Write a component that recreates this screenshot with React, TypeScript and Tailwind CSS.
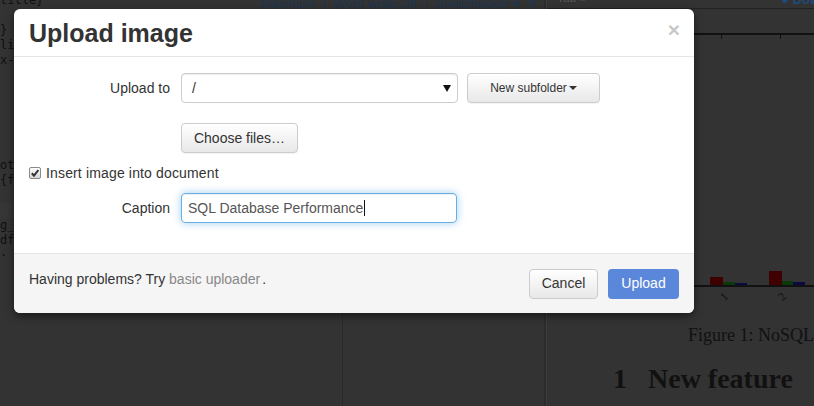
const mono = "font-['DejaVu_Sans_Mono',monospace]"

const codeLines = [
  '',
  '}',
  'li',
  'x-',
  '',
  '',
  '',
  '',
  '',
  '',
  'ot',
  '{f',
  '',
  '',
  'g_',
  'df',
  '· P',
  '',
  '',
  '',
  '',
  '',
  '',
  '',
  '',
  '',
]

function Backdrop() {
  return (
    <div className="absolute inset-0 flex">
      {/* editor side */}
      <div className="w-[544px] flex flex-col">
        <div className="h-[8px] flex overflow-hidden">
          <div className={`w-[260px] text-[12px] leading-[12px] -mt-[6px] text-[#101010] ${mono}`}>title{'}'}</div>
          <div className="text-[13px] leading-[13px] -mt-[3px] text-[#1f3650] whitespace-nowrap">
            Maximize&nbsp; | &nbsp;Word wrap: off&nbsp; | &nbsp;Spellchecker ▾&nbsp; ✕
          </div>
        </div>
        <div className="flex-1 flex">
          <div className="w-[343px] border-r border-[#2a2a2a]">
            {codeLines.map((l, i) => (
              <div
                key={i}
                className={`h-[15px] text-[12px] leading-[15px] text-[#101010] whitespace-nowrap ${mono} ${i === 13 ? 'bg-[#363636]' : ''}`}
              >
                {l}
              </div>
            ))}
          </div>
          <div className="flex-1" />
        </div>
      </div>
      <div className="w-[3px] bg-[#2c2c2c] border-r border-[#3c3c3c]" />
      {/* pdf side */}
      <div className="flex-1 flex flex-col">
        <div className="h-[9px] flex border-b border-[#222] overflow-hidden">
          <div className="ml-[10px] text-[12px] leading-[12px] -mt-[8px] text-[#555]">Tab »</div>
          <div className="ml-auto mr-[-6px] text-[13px] leading-[13px] -mt-[7px] text-[#1f4a7a] font-bold whitespace-nowrap">● Dow</div>
        </div>
        <div className="h-[24px]" />
        <div className="flex flex-col h-[254px] border-y-2 border-[#111]">
          <div className="flex h-[4px]">
            <div className="ml-[174px] w-px bg-[#111]" />
            <div className="ml-[58px] w-px bg-[#111]" />
          </div>
          <div className="flex-1 flex items-end pl-[163px]">
            <div className="w-[13px] h-[8px] bg-[#3e0000]" />
            <div className="w-[12px] h-[3px] bg-[#0a3a0a]" />
            <div className="w-[12px] h-[2px] bg-[#0a0a40]" />
            <div className="ml-[22px] w-[13px] h-[14px] bg-[#3e0000]" />
            <div className="w-[11px] h-[4px] bg-[#0a3a0a]" />
            <div className="w-[12px] h-[3px] bg-[#0a0a40]" />
          </div>
        </div>
        <div className="flex h-[16px] font-['Liberation_Serif',serif] text-[12px] text-[#111]">
          <div className="ml-[173px] -rotate-45 mt-[1px]">1</div>
          <div className="ml-[52px] -rotate-45 mt-[1px]">2</div>
        </div>
        <div className="mt-[21px] ml-[141px] whitespace-nowrap font-['Liberation_Serif',serif] text-[18px] leading-[22px] text-[#111]">
          Figure 1: NoSQL
        </div>
        <div className="mt-[17px] ml-[66px] whitespace-nowrap font-['Liberation_Serif',serif] text-[28px] leading-[32px] font-bold text-[#111]">
          1&nbsp;&nbsp; New feature
        </div>
      </div>
    </div>
  )
}

function Caret() {
  return <span className="inline-block w-0 h-0 border-x-[4px] border-x-transparent border-t-[4px] border-t-[#333] ml-[2px] align-middle" />
}

export default function App() {
  return (
    <div className="relative w-[814px] h-[406px] overflow-hidden bg-[#333] font-['Liberation_Sans',Arial,sans-serif]">
      <Backdrop />

      <div className="absolute left-[14px] top-[9px] w-[680px] rounded-[6px] bg-white shadow-[0_3px_9px_rgba(0,0,0,0.5)] text-[14px] text-[#333]">
        <div className="h-[48px] px-[15px] flex items-center justify-between border-b border-[#e5e5e5]">
          <h1 className="text-[25px] font-bold leading-none pt-[1px]">Upload image</h1>
          <span className="text-[21px] font-bold leading-none text-[#c8c8c8] -mt-[6px] mr-[-1px]">×</span>
        </div>

        <div className="pt-[16px] pb-[30px] px-[15px] flex flex-col">
          <div className="flex items-center h-[30px]">
            <label className="w-[141px] text-right">Upload to</label>
            <div className="ml-[11px] w-[277px] h-[30px] border border-[#ccc] rounded-[4px] flex items-center justify-between pl-[10px] pr-[6px] shadow-[inset_0_1px_1px_rgba(0,0,0,0.075)]">
              <span>/</span>
              <svg width="8" height="7" viewBox="0 0 8 7"><polygon points="0,0 8,0 4,7" fill="#111" /></svg>
            </div>
            <button className="ml-[9px] w-[133px] h-[30px] border border-[#ccc] rounded-[4px] bg-gradient-to-b from-white to-[#e8e8e8] text-[12px] text-[#333] flex items-center justify-center shadow-[0_1px_1px_rgba(0,0,0,0.05)]">
              New subfolder<Caret />
            </button>
          </div>

          <div className="flex mt-[20px] h-[30px]">
            <button className="ml-[152px] w-[117px] h-[30px] border border-[#ccc] rounded-[4px] bg-gradient-to-b from-white to-[#e8e8e8] text-[14px] text-[#333] shadow-[0_1px_1px_rgba(0,0,0,0.05)]">
              Choose files…
            </button>
          </div>

          <div className="flex items-center mt-[10px] h-[20px]">
            <span className="w-[12px] h-[12px] border border-[#8a8a8a] rounded-[2px] bg-gradient-to-b from-white to-[#d6d6d6] flex items-center justify-center">
              <svg width="10" height="10" viewBox="0 0 10 10">
                <path d="M1.8 5.2 L4 7.6 L8.4 2" stroke="#333" strokeWidth="2" fill="none" />
              </svg>
            </span>
            <span className="ml-[5px] tracking-[0.15px]">Insert image into document</span>
          </div>

          <div className="flex items-center mt-[10px] h-[30px]">
            <label className="w-[141px] text-right">Caption</label>
            <div className="ml-[11px] w-[276px] h-[30px] border border-[#66afe9] rounded-[4px] flex items-center pl-[6px] text-[#555] shadow-[inset_0_1px_1px_rgba(0,0,0,0.075),0_0_8px_rgba(102,175,233,0.6)]">
              <span>SQL Database Performance</span>
              <span className="w-px h-[16px] bg-[#111] ml-[1px]" />
            </div>
          </div>
        </div>

        <div className="h-[60px] px-[15px] flex items-center justify-between bg-[#f5f5f5] border-t border-[#e5e5e5] rounded-b-[6px]">
          <div className="-mt-[8px]">
            Having problems? Try <span className="text-[#888]">basic uploader</span>
            <span className="ml-[2px]">.</span>
          </div>
          <div className="flex gap-[10px]">
            <button className="w-[69px] h-[30px] border border-[#ccc] rounded-[4px] bg-gradient-to-b from-white to-[#e8e8e8] text-[#333]">Cancel</button>
            <button className="w-[71px] h-[30px] rounded-[4px] bg-[#5b87da] text-white">Upload</button>
          </div>
        </div>
      </div>
    </div>
  )
}
